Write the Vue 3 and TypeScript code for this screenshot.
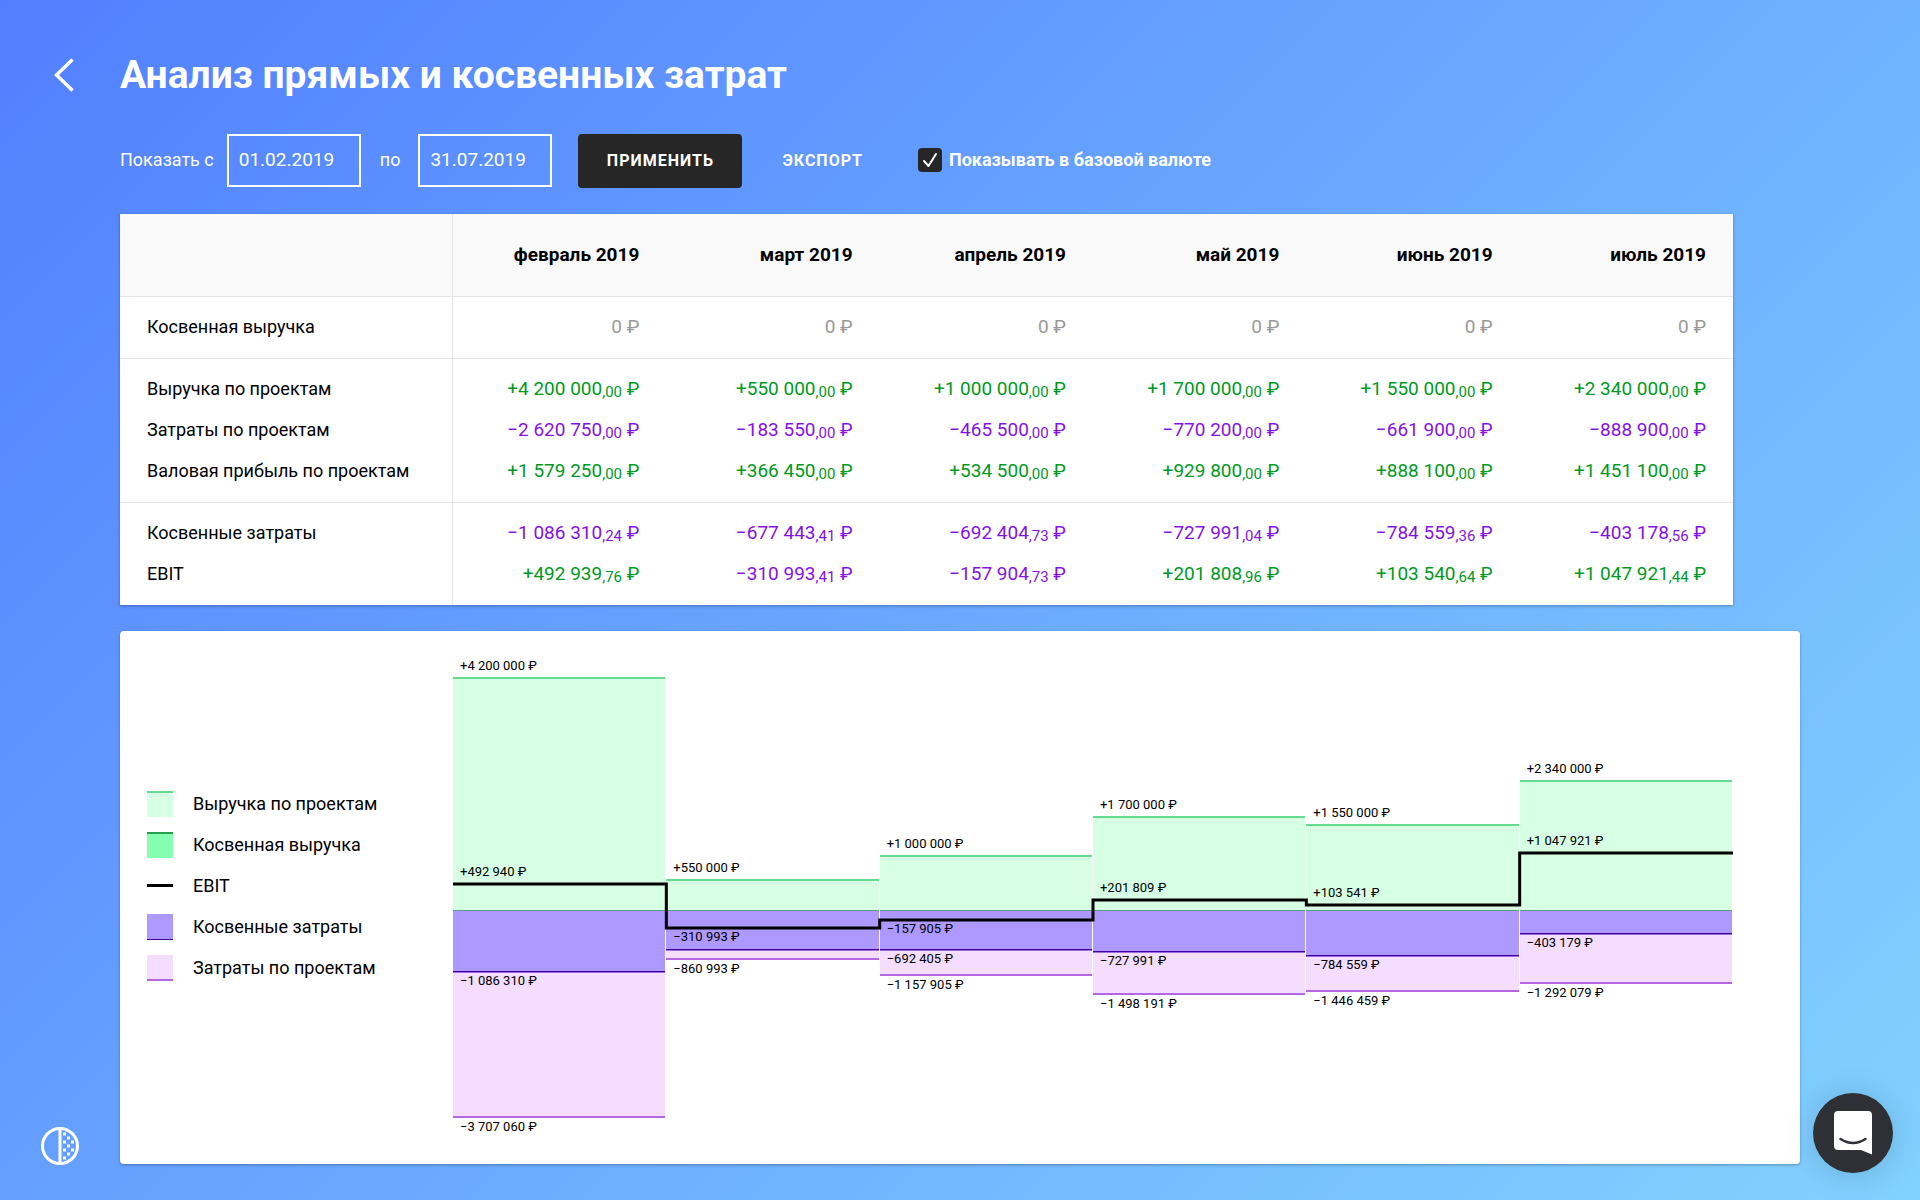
<script setup lang="ts">
import { ref } from 'vue'

interface Row {
  label: string
  values: number[]
}

interface Mark {
  value: number
  y: number
  kind: 'revenue' | 'indirect' | 'costs' | 'ebit'
  hidden?: boolean
}

const dateFrom = ref('01.02.2019')
const dateTo = ref('31.07.2019')
const baseCurrency = ref(true)

const months = ['февраль 2019', 'март 2019', 'апрель 2019', 'май 2019', 'июнь 2019', 'июль 2019']

const revenue = [4200000, 550000, 1000000, 1700000, 1550000, 2340000]
const costs = [-2620750, -183550, -465500, -770200, -661900, -888900]
const indirect = [-1086310.24, -677443.41, -692404.73, -727991.04, -784559.36, -403178.56]
const ebit = [492939.76, -310993.41, -157904.73, 201808.96, 103540.64, 1047921.44]

const groups: Row[][] = [
  [{ label: 'Косвенная выручка', values: [0, 0, 0, 0, 0, 0] }],
  [
    { label: 'Выручка по проектам', values: revenue },
    { label: 'Затраты по проектам', values: costs },
    { label: 'Валовая прибыль по проектам', values: [1579250, 366450, 534500, 929800, 888100, 1451100] },
  ],
  [
    { label: 'Косвенные затраты', values: indirect },
    { label: 'EBIT', values: ebit },
  ],
]

const legend = [
  { label: 'Выручка по проектам', kind: 'revenue' },
  { label: 'Косвенная выручка', kind: 'extra' },
  { label: 'EBIT', kind: 'ebit' },
  { label: 'Косвенные затраты', kind: 'indirect' },
  { label: 'Затраты по проектам', kind: 'costs' },
]

const sign = (v: number) => (v > 0 ? '+' : v < 0 ? '−' : '')
const group = (n: number) => String(n).replace(/\B(?=(\d{3})+$)/g, '\u00a0')
const whole = (v: number) => sign(v) + group(Math.floor(Math.abs(v)))
const cents = (v: number) => ',' + String(Math.round(Math.abs(v) * 100) % 100).padStart(2, '0')
const rounded = (v: number) => sign(v) + group(Math.round(Math.abs(v))) + '\u00a0₽'
const tone = (v: number) => (v > 0 ? 'plus' : v < 0 ? 'minus' : 'zero')

// Vertical scale of the chart: pixels per rouble, with zero at a fixed height.
const scale = 233 / 4200000
const zero = 233
const plotHeight = 440
const y = (v: number) => Math.round(zero - v * scale)

// Edge lines of the negative bars are drawn just under their value.
const edge = 2

// Total costs of each month, as marked under its lowest bar.
const floors = [-3707060, -860993, -1157905, -1498191, -1446459, -1292079]

const columns = months.map((month, i) => {
  const marks: Mark[] = [
    { value: revenue[i], y: y(revenue[i]), kind: 'revenue' },
    { value: ebit[i], y: y(ebit[i]), kind: 'ebit' },
    { value: indirect[i], y: y(indirect[i]) + 1, kind: 'indirect', hidden: i === 1 },
    { value: floors[i], y: y(floors[i]) + 1, kind: 'costs' },
  ]
  return {
    month,
    top: y(revenue[i]),
    revenueHeight: zero - y(revenue[i]),
    indirectHeight: y(indirect[i]) + edge - zero,
    costsHeight: y(floors[i]) - y(indirect[i]),
    marks: marks.filter((m) => !m.hidden),
  }
})

const step = 100
const ebitPath = ebit
  .map((v, i) => `${i === 0 ? 'M0' : 'L' + i * step} ${y(v) + 1}H${(i + 1) * step}`)
  .join('')
</script>

<template>
  <div class="page">
    <header class="head">
      <a class="back" href="#" aria-label="Назад">
        <svg width="20" height="34" viewBox="0 0 20 34" fill="none" stroke="#fff" stroke-width="3.500">
          <path d="M18.500 1.500L2.500 17L18.500 32.500" />
        </svg>
      </a>
      <h1>Анализ прямых и косвенных затрат</h1>
    </header>

    <form class="filters" @submit.prevent>
      <label for="from">Показать с</label>
      <input id="from" v-model="dateFrom" class="date" type="text" />
      <label class="to" for="to">по</label>
      <input id="to" v-model="dateTo" class="date" type="text" />
      <button class="apply" type="submit">ПРИМЕНИТЬ</button>
      <button class="export" type="button">ЭКСПОРТ</button>
      <label class="check">
        <span class="box">
          <input v-model="baseCurrency" type="checkbox" />
          <svg v-if="baseCurrency" width="24" height="24" viewBox="0 0 24 24" fill="none" stroke="#fff" stroke-width="2">
            <path d="M6 13L10.500 18L18 6" stroke-linecap="round" stroke-linejoin="round" />
          </svg>
        </span>
        <span>Показывать в базовой валюте</span>
      </label>
    </form>

    <table class="report">
      <thead>
        <tr>
          <td></td>
          <th v-for="m in months" :key="m" scope="col">{{ m }}</th>
        </tr>
      </thead>
      <tbody v-for="(rows, g) in groups" :key="g">
        <tr v-for="row in rows" :key="row.label">
          <th scope="row">{{ row.label }}</th>
          <td v-for="(v, i) in row.values" :key="i" :class="tone(v)">{{ whole(v) }}<small v-if="v !== 0">{{ cents(v) }}</small>&nbsp;₽</td>
        </tr>
      </tbody>
    </table>

    <section class="card">
      <ul class="legend">
        <li v-for="item in legend" :key="item.kind">
          <span class="swatch" :class="item.kind"></span>
          <span>{{ item.label }}</span>
        </li>
      </ul>
      <div class="plot" :style="{ height: plotHeight + 'px' }">
        <div v-for="c in columns" :key="c.month" class="column" :style="{ paddingTop: c.top + 'px' }">
          <div class="bar revenue" :style="{ height: c.revenueHeight + 'px' }"></div>
          <div class="bar indirect" :style="{ height: c.indirectHeight + 'px' }"></div>
          <div class="bar costs" :style="{ height: c.costsHeight + 'px' }"></div>
        </div>
        <svg class="line" :viewBox="`0 0 600 ${plotHeight}`" preserveAspectRatio="none">
          <path :d="ebitPath" fill="none" stroke="#000" stroke-width="3" vector-effect="non-scaling-stroke" />
        </svg>
        <div class="labels">
          <div v-for="c in columns" :key="c.month" class="label-column">
            <span v-for="m in c.marks" :key="m.kind" :class="m.value > 0 ? 'above' : 'below'" :style="{ top: m.y + 'px' }">{{ rounded(m.value) }}</span>
          </div>
        </div>
      </div>
    </section>

    <button class="contrast" type="button" aria-label="Контраст">
      <svg width="38" height="38" viewBox="0 0 38 38">
        <circle cx="19" cy="19" r="17.500" fill="none" stroke="#fff" stroke-width="3" />
        <path d="M19 2V36" stroke="#fff" stroke-width="3" />
        <path d="M22 5.500h3v3h-3zM26 9.500h3v3h-3zM22 13.500h3v3h-3zM30 13.500h3v3h-3zM26 17.500h3v3h-3zM22 21.500h3v3h-3zM30 21.500h3v3h-3zM26 25.500h3v3h-3zM22 29.500h3v3h-3z" fill="#fff" />
      </svg>
    </button>
    <button class="chat" type="button" aria-label="Чат">
      <svg width="38" height="44" viewBox="0 0 38 44">
        <path d="M4 0H34Q38 0 38 4V43.500L27 39H4Q0 39 0 35V4Q0 0 4 0Z" fill="#fff" />
        <path d="M6.500 28Q19 36 31.500 28" fill="none" stroke="#2f2f36" stroke-width="2.500" stroke-linecap="round" />
      </svg>
    </button>
  </div>
</template>

<style>
body {
  margin: 0;
}
</style>

<style scoped>
.page {
  box-sizing: border-box;
  min-height: 100vh;
  padding: 48px 120px 36px;
  background: linear-gradient(135deg, #527fff, #82d2ff);
  font-family: Roboto, "Liberation Sans", sans-serif;
  font-size: 18px;
  line-height: 24px;
  color: #000;
}

button,
input {
  font: inherit;
}

.head {
  display: flex;
  align-items: center;
  height: 54px;
  margin-left: -66px;
}

.back {
  display: flex;
  width: 66px;
}

h1 {
  margin: 0;
  font-size: 39px;
  line-height: 54px;
  font-weight: 700;
  color: #fff;
}

.filters {
  display: flex;
  align-items: center;
  height: 54px;
  margin: 32px 0 26px;
  color: #fff;
}

.filters label {
  padding-bottom: 2px;
}

.date {
  box-sizing: border-box;
  align-self: flex-start;
  width: 134px;
  height: 53px;
  margin-left: 13px;
  padding: 0 10px 2px;
  border: 2px solid #fff;
  border-radius: 0;
  background: transparent;
  color: #fff;
  font-size: 19px;
}

.to {
  margin-left: 19px;
}

.to + .date {
  margin-left: 18px;
}

.apply {
  width: 164px;
  height: 54px;
  margin-left: 26px;
  padding: 0;
  border: 0;
  border-radius: 4px;
  background: #262626;
  color: #fff;
  font-size: 16px;
  font-weight: 700;
  letter-spacing: 1px;
}

.export {
  margin-left: 40px;
  padding: 0;
  border: 0;
  background: none;
  color: #fff;
  font-size: 16px;
  font-weight: 700;
  letter-spacing: 1px;
}

.check {
  display: flex;
  align-items: center;
  gap: 7px;
  margin-left: 55px;
  font-weight: 700;
}

.box {
  display: grid;
}

.box > * {
  grid-area: 1 / 1;
}

.box input {
  appearance: none;
  width: 24px;
  height: 24px;
  margin: 0;
  border-radius: 4px;
  background: #262626;
}

.box svg {
  z-index: 1;
  pointer-events: none;
}

.report {
  table-layout: fixed;
  width: calc(100% - 67px);
  border-spacing: 0;
  background: #fff;
  box-shadow: 0 1px 3px rgba(0, 0, 0, 0.3);
}

.report thead td,
.report tbody th {
  box-sizing: border-box;
  width: 333px;
  border-right: 1px solid #e5e5e5;
}

.report thead th,
.report thead td {
  box-sizing: border-box;
  height: 83px;
  padding: 0 27px 0 0;
  border-bottom: 1px solid #e5e5e5;
  background: #f9f9f9;
  text-align: right;
  font-size: 19px;
  font-weight: 700;
}

.report tbody th {
  padding: 8px 0 9px 27px;
  font-weight: 400;
  text-align: left;
}

.report tbody td {
  padding: 8px 27px 9px 0;
  font-size: 19px;
  text-align: right;
}

.report tbody tr:first-child > * {
  padding-top: 18px;
}

.report tbody tr:last-child > * {
  padding-bottom: 19px;
  border-bottom: 1px solid #e5e5e5;
}

.report tbody:last-child tr:last-child > * {
  border-bottom: 0;
}

.report small {
  position: relative;
  top: 2px;
  font-size: 15px;
  line-height: 16px;
}

.plus {
  color: #009a22;
}

.minus {
  color: #8412e8;
}

.zero {
  color: #999;
}

.card {
  display: flex;
  align-items: flex-start;
  margin-top: 26px;
  padding: 46px 67px 47px 0;
  border-radius: 4px;
  background: #fff;
  box-shadow: 0 1px 3px rgba(0, 0, 0, 0.3);
}

.legend {
  flex: none;
  box-sizing: border-box;
  width: 333px;
  margin: 106px 0 0;
  padding: 0 0 0 27px;
  list-style: none;
}

.legend li {
  display: flex;
  align-items: center;
  gap: 20px;
  height: 41px;
}

.swatch {
  box-sizing: border-box;
  width: 26px;
  height: 26px;
}

.revenue {
  border-top: 2px solid #66dc90;
  background: #d6ffe4;
}

.extra {
  border-top: 2px solid #22a04c;
  background: #85ffb0;
}

.swatch.ebit {
  height: 3px;
  background: #000;
}

.indirect {
  border-bottom: 1px solid #4400a8;
  background: #ad99ff;
}

.costs {
  border-bottom: 2px solid #b468e0;
  background: #f4ddff;
}

.plot {
  position: relative;
  display: flex;
  flex: 1;
}

.column {
  box-sizing: border-box;
  flex: 1;
  border-right: 1px solid #fff;
}

.bar {
  box-sizing: border-box;
}

.bar.indirect {
  border-top: 1px solid #5a9a8a;
}

.bar.costs {
  border-top: 1px solid #9a70d8;
}

.line,
.labels {
  position: absolute;
  inset: 0;
  width: 100%;
  height: 100%;
}

.labels {
  display: flex;
}

.label-column {
  position: relative;
  flex: 1;
  font-size: 13px;
  line-height: 16px;
}

.label-column span {
  position: absolute;
  left: 7px;
}

.above {
  margin-top: -19px;
}

.below {
  margin-top: 2px;
}

.contrast,
.chat {
  position: fixed;
  display: flex;
  align-items: center;
  justify-content: center;
  padding: 0;
  border: 0;
}

.contrast {
  left: 41px;
  bottom: 35px;
  background: none;
}

.chat {
  right: 27px;
  bottom: 27px;
  width: 80px;
  height: 80px;
  border-radius: 50%;
  background: #2f2f36;
  box-shadow: 0 2px 32px rgba(0, 0, 0, 0.16);
}
</style>
